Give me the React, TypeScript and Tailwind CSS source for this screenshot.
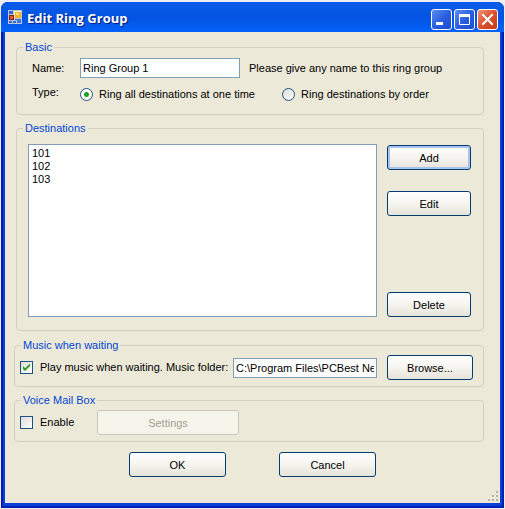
import type { ButtonHTMLAttributes, ReactNode } from "react";

const destinations = ["101", "102", "103"];

const textBox =
  "h-5 min-w-0 border border-[#7f9db9] bg-white px-0.5 text-[11px] leading-4 text-black outline-none";

function PushButton({
  className = "",
  ...props
}: ButtonHTMLAttributes<HTMLButtonElement>) {
  return (
    <button
      type="button"
      className={`h-[25px] shrink-0 rounded-[3px] border border-[#003c74] bg-linear-to-b from-white via-[#f5f4ef] to-[#e6e3da] text-center text-[11px] leading-4 text-black disabled:border-[#c9c7ba] disabled:from-[#f5f4ea] disabled:via-[#f5f4ea] disabled:to-[#f5f4ea] disabled:text-[#a1a192] ${className}`}
      {...props}
    />
  );
}

function Group({
  title,
  className = "",
  bodyClassName = "",
  children,
}: {
  title: string;
  className?: string;
  bodyClassName?: string;
  children: ReactNode;
}) {
  return (
    <fieldset className={`min-w-0 rounded-[4px] border border-[#d0d0bf] ${className}`}>
      <legend className="ml-1.5 px-0.5 leading-[13px] text-[#0046d5]">{title}</legend>
      <div className={bodyClassName}>{children}</div>
    </fieldset>
  );
}

function Radio({
  label,
  className = "",
  defaultChecked,
}: {
  label: string;
  className?: string;
  defaultChecked?: boolean;
}) {
  return (
    <label className={`flex items-center gap-1.5 whitespace-nowrap ${className}`}>
      <input
        type="radio"
        name="ringType"
        defaultChecked={defaultChecked}
        className="size-[13px] shrink-0 appearance-none rounded-full border border-[#1d5281] bg-linear-to-br from-[#dcdcd7] to-white checked:bg-white checked:bg-[radial-gradient(circle,#21a121_0_2px,#ffffff_3px)]"
      />
      {label}
    </label>
  );
}

function Check({
  label,
  className = "",
  defaultChecked,
}: {
  label: string;
  className?: string;
  defaultChecked?: boolean;
}) {
  return (
    <label className={`flex shrink-0 items-center gap-[7px] whitespace-nowrap ${className}`}>
      <span className="grid size-[13px] shrink-0">
        <input
          type="checkbox"
          defaultChecked={defaultChecked}
          className="peer col-start-1 row-start-1 size-[13px] appearance-none border border-[#1d5281] bg-linear-to-br from-[#dcdcd7] to-white"
        />
        <svg
          viewBox="0 0 13 13"
          className="pointer-events-none invisible col-start-1 row-start-1 size-[13px] peer-checked:visible"
        >
          <path d="M3 5v3l2 2 5-5V2.500L5 7.200z" fill="#21a121" />
        </svg>
      </span>
      {label}
    </label>
  );
}

function AppIcon() {
  return (
    <svg viewBox="0 0 14 14" className="size-3.5 shrink-0" shapeRendering="crispEdges">
      <rect width="14" height="14" fill="#b9c6e0" />
      <rect x="1" y="1" width="4" height="3" fill="#3569cf" />
      <rect x="6" y="1" width="7" height="7" fill="#fff3c0" />
      <rect x="7" y="2" width="6" height="6" fill="#f3b51c" />
      <rect x="8" y="3" width="3" height="2" fill="#ffe37a" />
      <rect x="1" y="5" width="5" height="5" fill="#8c1d10" />
      <rect x="2" y="6" width="3" height="3" fill="#e0583a" />
      <rect x="1" y="11" width="3" height="2" fill="#3569cf" />
      <rect x="5" y="11" width="3" height="2" fill="#3569cf" />
      <rect x="7" y="9" width="2" height="1" fill="#3569cf" />
      <rect x="9" y="9" width="4" height="4" fill="#3f78dc" />
    </svg>
  );
}

function CaptionButton({
  label,
  className,
  children,
}: {
  label: string;
  className: string;
  children: ReactNode;
}) {
  return (
    <button
      type="button"
      aria-label={label}
      className={`size-[21px] rounded-[3px] border border-white ${className}`}
    >
      <svg viewBox="0 0 19 19" className="size-[19px]" fill="none" stroke="#fff">
        {children}
      </svg>
    </button>
  );
}

const captionBlue = "bg-linear-to-br from-[#5c8df2] via-[#2a5fe0] to-[#1c4ccc]";
const captionRed = "bg-linear-to-br from-[#ee9272] via-[#dd5030] to-[#c43a16]";

function TitleBar() {
  return (
    <header className="flex h-[30px] items-center bg-linear-to-b from-[#0a5ce8] via-[#0453e2] to-[#0462fa] pr-1.5 pl-[7px]">
      <AppIcon />
      <h1 className="ml-[5px] flex-1 pt-0.5 font-['Open_Sans','Noto_Sans',sans-serif] text-[13px] leading-4 font-bold whitespace-nowrap text-white [text-shadow:1px_1px_1px_#0a1883]">
        Edit Ring Group
      </h1>
      <div className="flex gap-0.5 pt-1">
        <CaptionButton label="Minimize" className={captionBlue}>
          <path d="M4 13.500h7" strokeWidth="3" />
        </CaptionButton>
        <CaptionButton label="Maximize" className={captionBlue}>
          <path d="M4.500 5v9.500h10V5" strokeWidth="1" />
          <path d="M4 5.500h11" strokeWidth="3" />
        </CaptionButton>
        <CaptionButton label="Close" className={captionRed}>
          <path d="M5 5l9 9M14 5l-9 9" strokeWidth="2" strokeLinecap="square" />
        </CaptionButton>
      </div>
    </header>
  );
}

export default function App() {
  return (
    <div className="bg-[#eeeef4] px-px pt-0.5 pb-px font-['Liberation_Sans',Arial,sans-serif] text-[11px] leading-[13px] text-black">
      <div className="overflow-hidden rounded-t-[7px] bg-[#0a3fd8] shadow-[inset_0_0_0_2px_#0020b4]">
        <TitleBar />

        <div className="mx-1 mb-[5px] bg-[#ece9d8]">
          <main className="pt-[9px] pr-4 pl-[9px]">
            <Group title="Basic" className="ml-0.5" bodyClassName="pt-1 pb-3 pl-[15px]">
              <div className="flex items-center">
                <label htmlFor="name" className="w-12 shrink-0">
                  Name:
                </label>
                <input
                  id="name"
                  type="text"
                  defaultValue="Ring Group 1"
                  className={`w-40 ${textBox}`}
                />
                <span className="ml-[9px] whitespace-nowrap">
                  Please give any name to this ring group
                </span>
              </div>
              <div
                role="radiogroup"
                aria-labelledby="type"
                className="mt-2 flex h-4 items-center"
              >
                <span id="type" className="w-12 shrink-0 self-start">
                  Type:
                </span>
                <Radio
                  label="Ring all destinations at one time"
                  className="w-[202px]"
                  defaultChecked
                />
                <Radio label="Ring destinations by order" />
              </div>
            </Group>

            <Group
              title="Destinations"
              className="mt-[7px] ml-0.5"
              bodyClassName="flex gap-2.5 pt-[9px] pr-3 pb-[13px] pl-[11px]"
            >
              <select
                multiple
                aria-label="Destinations"
                className="h-[173px] min-w-0 flex-1 appearance-none overflow-hidden border border-[#7f9db9] bg-white px-[3px] py-0.5 outline-none"
              >
                {destinations.map((item) => (
                  <option key={item} className="h-[13px] min-h-0 p-0">
                    {item}
                  </option>
                ))}
              </select>
              <div className="flex flex-col pt-px">
                <PushButton className="w-21 shadow-[inset_0_0_0_2px_#a9c3ef]">Add</PushButton>
                <PushButton className="mt-[21px] w-21">Edit</PushButton>
                <PushButton className="mt-auto w-21">Delete</PushButton>
              </div>
            </Group>

            <Group
              title="Music when waiting"
              className="mt-2"
              bodyClassName="flex items-center pt-[3px] pr-2.5 pb-1.5 pl-[5px]"
            >
              <Check
                label="Play music when waiting. Music folder:"
                className="w-[213px]"
                defaultChecked
              />
              <input
                type="text"
                aria-label="Music folder"
                defaultValue="C:\Program Files\PCBest Net"
                className={`flex-1 ${textBox}`}
              />
              <PushButton className="ml-2.5 w-[86px]">Browse...</PushButton>
            </Group>

            <Group
              title="Voice Mail Box"
              className="mt-[7px]"
              bodyClassName="flex items-center pt-[3px] pb-1.5 pl-[5px]"
            >
              <Check label="Enable" className="w-[77px]" />
              <PushButton disabled className="w-[142px]">
                Settings
              </PushButton>
            </Group>
          </main>

          <footer className="pt-2.5">
            <div className="flex justify-center gap-[53px]">
              <PushButton className="w-[97px]">OK</PushButton>
              <PushButton className="w-[97px]">Cancel</PushButton>
            </div>
            <div className="flex h-[26px] items-end justify-end pr-px pb-px">
              <svg viewBox="0 0 11 11" className="size-[11px]" fill="#b8b4a2">
                <path d="M8 0h2v2H8zM4 4h2v2H4zM8 4h2v2H8zM0 8h2v2H0zM4 8h2v2H4zM8 8h2v2H8z" />
              </svg>
            </div>
          </footer>
        </div>
      </div>
    </div>
  );
}
